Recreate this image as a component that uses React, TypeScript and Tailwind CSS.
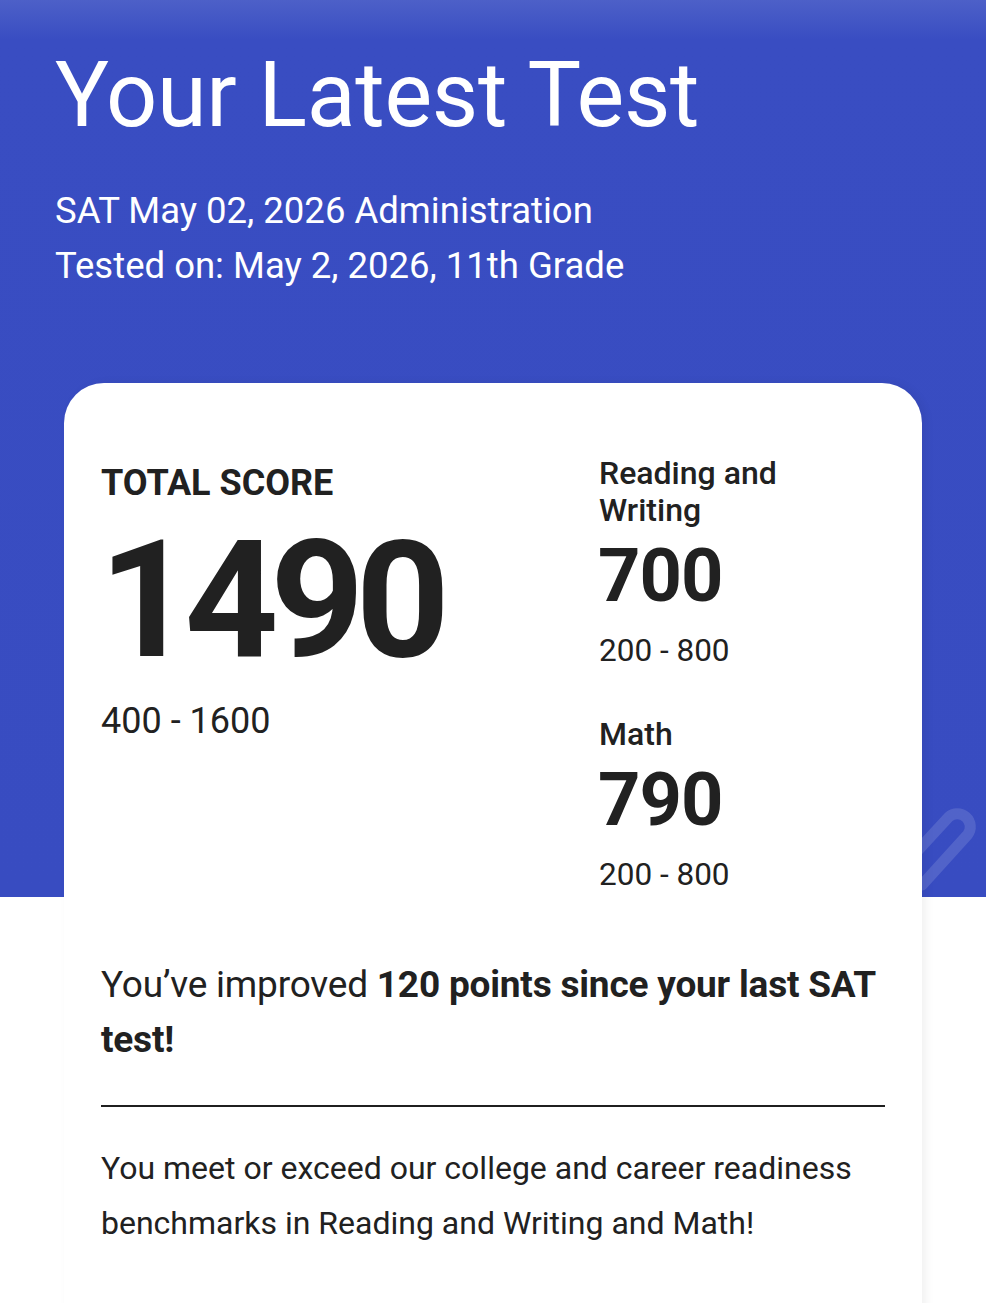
const card = {
  total: 1490,
  totalRange: "400 - 1600",
  sections: [
    { name: "Reading and Writing", score: 700, range: "200 - 800" },
    { name: "Math", score: 790, range: "200 - 800" },
  ],
};

export default function App() {
  return (
    <div
      className="relative min-h-[1303px] overflow-hidden bg-[linear-gradient(to_bottom,#4d60c8_0px,#394dc2_40px,#384cc1_897px,#ffffff_897px)] text-[#212121]"
      style={{ fontFamily: "Roboto, 'Noto Sans', sans-serif" }}
    >
      {/* faint paperclip stroke peeking out from behind the card */}
      <svg
        className="absolute left-[880px] top-[790px]"
        width="106"
        height="110"
        viewBox="0 0 106 110"
        fill="none"
      >
        <path
          d="M18 82 L68.4 27.3 A13 13 0 0 1 87.6 44.7 L42 95"
          stroke="white"
          strokeOpacity="0.13"
          strokeWidth="11"
          strokeLinecap="round"
        />
      </svg>

      <header className="px-[55px] pt-[46px] text-white">
        <h1 className="text-[90px] leading-[100px] tracking-[-0.3px]">Your Latest Test</h1>
        <div className="mt-[37px] text-[36.5px] leading-[55px]">
          <p>SAT May 02, 2026 Administration</p>
          <p>Tested on: May 2, 2026, 11th Grade</p>
        </div>
      </header>

      <section className="relative mx-[64px] mt-[90px] min-h-[960px] rounded-t-[40px] bg-white px-[37px] pt-[70px] shadow-[4px_0_10px_rgba(0,0,0,0.06)]">
        <div className="grid grid-cols-[498px_1fr] items-start">
          <div className="pt-[10px]">
            <h2 className="text-[36px] font-bold leading-[40px]">TOTAL SCORE</h2>
            <p className="-ml-[2px] mt-[22px] text-[164px] font-bold leading-[150px] tracking-[-8.5px]">
              {card.total}
            </p>
            <p className="mt-[26px] text-[36px] leading-[40px]">{card.totalRange}</p>
          </div>
          <div className="flex flex-col gap-[46px] pt-[2px]">
            {card.sections.map((s) => (
              <div key={s.name}>
                <h3 className="w-[200px] text-[32px] font-medium leading-[37px]">{s.name}</h3>
                <p className="-ml-[1px] mt-[7px] text-[74px] font-bold leading-[80px] tracking-[-1px]">
                  {s.score}
                </p>
                <p className="mt-[16px] text-[31.5px] leading-[38px]">{s.range}</p>
              </div>
            ))}
          </div>
        </div>

        <p className="mt-[63px] text-[37px] leading-[55px] tracking-[-0.2px]">
          You’ve improved <strong className="font-bold">120 points since your last SAT test!</strong>
        </p>
        <hr className="mt-[38px] border-t-2 border-[#1f1f1f]" />
        <p className="mt-[34px] text-[32px] leading-[55px]">
          You meet or exceed our college and career readiness benchmarks in Reading and Writing and
          Math!
        </p>
      </section>
    </div>
  );
}
